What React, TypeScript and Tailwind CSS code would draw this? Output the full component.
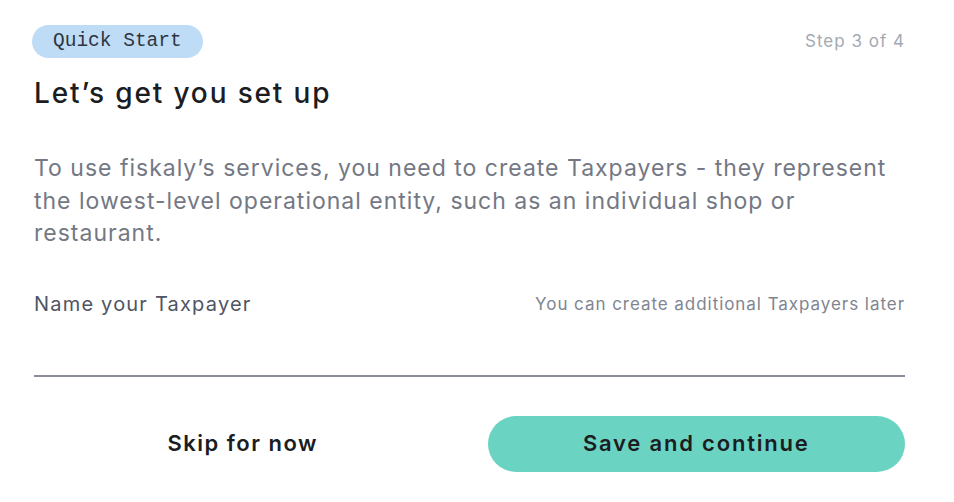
export default function App() {
  return (
    <div className="min-h-screen bg-white font-['Inter','Liberation_Sans',sans-serif]">
      <div className="ml-[34px] w-[871px] pt-[25px]">
        {/* header */}
        <div className="flex items-center justify-between">
          <span className="-ml-[2px] inline-flex h-[33px] items-center rounded-full bg-[#bfdcf7] px-[21px] font-['Liberation_Mono','DejaVu_Sans_Mono',monospace] text-[19.5px] text-[#2f3540]">
            Quick Start
          </span>
          <span className="text-[17px] tracking-[1px] text-[#a3a9b3]">Step 3 of 4</span>
        </div>

        <h1 className="mt-[17px] text-[28px] font-medium leading-[36px] tracking-[1.85px] text-[#1b1d22]">
          Let’s get you set up
        </h1>

        <p className="mt-[41px] text-[23px] leading-[32.5px] tracking-[1px] text-[#737884]">
          To use fiskaly’s services, you need to create Taxpayers - they represent
          <br />
          the lowest-level operational entity, such as an individual shop or
          <br />
          restaurant.
        </p>

        {/* field */}
        <div className="mt-[40px] flex items-center justify-between">
          <label className="text-[20px] leading-[28px] tracking-[1.2px] text-[#4f5563]">
            Name your Taxpayer
          </label>
          <span className="text-[17px] leading-[28px] tracking-[0.95px] text-[#7f8591]">
            You can create additional Taxpayers later
          </span>
        </div>
        <input
          type="text"
          aria-label="Name your Taxpayer"
          className="mt-[13px] block h-[46px] w-full border-b-2 border-[#8a8e9a] bg-transparent outline-none"
        />

        {/* actions */}
        <div className="mt-[39px] grid grid-cols-2 gap-[36px]">
          <button className="h-[56px] text-[22px] font-semibold tracking-[1.5px] text-[#1b1d22]">
            Skip for now
          </button>
          <button className="h-[56px] rounded-full bg-[#6bd3c2] text-[22px] font-semibold tracking-[1.8px] text-[#1b1d22]">
            Save and continue
          </button>
        </div>
      </div>
    </div>
  );
}
